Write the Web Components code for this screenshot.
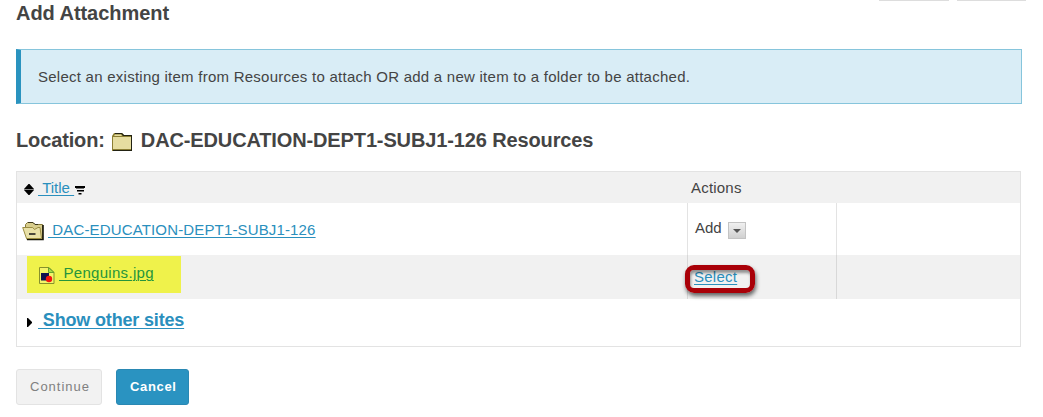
<!DOCTYPE html>
<html lang="en"><head><meta charset="utf-8"><title>Add Attachment</title>
<style>
html,body{margin:0;background:#fff}
body{height:417px;overflow:hidden;font:15px/20px "Liberation Sans",Arial,sans-serif;color:#444}
</style></head><body>
<attachment-page></attachment-page>
<script>
const define=(name,html)=>{
  const t=document.createElement('template');t.innerHTML=html;
  customElements.define(name,class extends HTMLElement{
    constructor(){super();this.attachShadow({mode:'open'}).append(t.content.cloneNode(true));}
  });
};
define('page-title',`<style>:host{display:flex;font-size:20px;line-height:24px;font-weight:700;white-space:pre;letter-spacing:-.05px}</style><slot></slot>`);
define('info-banner',`<style>:host{display:block;box-sizing:border-box;width:1006px;height:55px;border:1px solid #86c5dc;border-left:5px solid #2a93bf;background:#d9edf6;padding:17px 17px 0;letter-spacing:.25px;white-space:nowrap}</style><slot></slot>`);
define('text-link',`<style>:host{display:block;color:#2a8fbd;white-space:pre;text-decoration:underline;text-decoration-thickness:1px;text-underline-offset:2px}</style><slot></slot>`);
define('folder-icon',`<style>:host{display:block;width:20px;height:18px;white-space:normal}svg{display:block}</style>
<svg width="20" height="18"><path d="M0 18V3L2 0h8l2 2h8v16z" fill="#8b7e33"/><path d="M3 0h7l2 2h8v1H11L9.500 1H3z" fill="#222212"/><path d="M1 4h18v12H1z" fill="#e6dda0"/><path d="M3 1.500h6l1 1.500H2z" fill="#e6dda0"/><path d="M19 3h1v15H1v-1h18z" fill="#222212"/></svg>`);
define('open-folder-icon',`<style>:host{display:block;width:22px;height:19px;white-space:normal}svg{display:block}</style>
<svg width="22" height="19"><path d="M3.500 8V2.500l2-2H11l2 2h7.500v15H5z" fill="#d8cd8c" stroke="#857839"/><path d="M6 .500h5l2 2h3" fill="none" stroke="#3a351a"/><path d="M21 3v14.500H5" fill="none" stroke="#16160a" stroke-width="1.600"/><path d="M.7 5.500h10L12.500 7.500 16 5.500h2l1.500 11H4.500z" fill="#e9e1a8" stroke="#9b8d43"/><path d="M7 12h6.500" stroke="#222" stroke-width="1.600"/></svg>`);
define('image-icon',`<style>:host{display:block;width:16px;height:18px;white-space:normal}svg{display:block}</style>
<svg width="16" height="18"><path d="M.5.500H10l5 5v11H.5z" fill="#f4f468" stroke="#87912c"/><path d="M9.500.500v5H15z" fill="#a8dc4a" stroke="#66a32c"/><path d="M2 6h8v7.500H2z" fill="#10104f"/><circle cx="10" cy="12" r="3.200" fill="#f5160d"/></svg>`);
define('sort-icon',`<style>:host{display:block;width:10px;height:11px;white-space:normal}svg{display:block}</style>
<svg width="10" height="11"><path d="M0 5 4.500 0h1L10 5z" fill="#000"/><path d="M0 6h10L5.500 11h-1z" fill="#000"/><path d="M0 5h10v1H0z" fill="#888"/></svg>`);
define('filter-icon',`<style>:host{display:block;width:10px;height:9px;white-space:normal}svg{display:block}</style>
<svg width="10" height="9"><path d="M0 0h10v2H0zM2 4h7v1.500H2zM3.500 7h3v1.500h-3z" fill="#000"/><path d="M1 2h8v1H1zM3 5h5v1H3z" fill="#777"/></svg>`);
define('expand-icon',`<style>:host{display:block;width:5px;height:9px;white-space:normal}svg{display:block}</style><svg width="5" height="9"><path d="M0 0h1l4 4v1L1 9H0z" fill="#000"/></svg>`);
define('menu-toggle',`<style>:host{display:block;box-sizing:border-box;width:18px;height:17px;border:1px solid #c3c3c3;background:linear-gradient(#f0f0f0,#d0d0d0);white-space:normal}svg{display:block}</style><svg width="16" height="15"><path d="M4 6h8l-4 4z" fill="#555"/></svg>`);
define('action-button',`<style>:host{display:block;box-sizing:border-box;height:36px;border:1px solid #e3e3e3;border-radius:3px;background:#f2f2f2;color:#808080;font-size:13px;line-height:34px;padding-left:13px;letter-spacing:1px;white-space:nowrap;width:86px}:host([primary]){width:73px;background:#2a93c1;border-color:#2a88b3;color:#fff;font-weight:700;letter-spacing:.65px}</style><slot></slot>`);
define('resource-table',`<style>
:host{display:block;box-sizing:border-box;width:1005px;height:176px;border:1px solid #e3e3e3}
.r{display:grid;grid-template-columns:670px 149px 184px;height:52px}.c{display:flex;align-items:flex-start;box-sizing:border-box;white-space:pre}
.r .c+.c{border-left:1px solid #e3e3e3}.r.h{height:31px;background:#f1f1f1}.r.h .c+.c{border-color:transparent}
.r.f{height:44px;background:#f1f1f1}.r.f .c+.c{border-color:#d8d8d8}.s{height:47px;font-size:18px;font-weight:700;letter-spacing:-.17px}
.mark{display:flex;box-sizing:border-box;width:154px;height:37px;margin:1px 0 0 10px;padding:7px 0 0 12px;background:#eff24b}
.mark text-link{color:#25953d;letter-spacing:.3px}
.c.wrap{position:relative;padding:12px 0 0 6px;letter-spacing:.25px}
.ring{position:absolute;left:-3px;top:10px;width:70px;height:28px;box-sizing:border-box;border:5px solid #a90008;border-radius:9px;box-shadow:1px 3px 4px #0009,inset 1px 3px 3px #0006}
</style>
<div class="r h"><div class="c"><sort-icon style="margin:12px 4px 0 7px"></sort-icon><text-link style="margin-top:6px">&nbsp;Title </text-link><filter-icon style="margin:14px 0 0 1px"></filter-icon></div><div class="c" style="padding:6px 0 0 3px;letter-spacing:.2px">Actions</div><div class="c"></div></div>
<div class="r"><div class="c"><open-folder-icon style="margin:19px 4px 0 5px"></open-folder-icon><text-link style="margin-top:17px;letter-spacing:.15px">&nbsp;DAC-EDUCATION-DEPT1-SUBJ1-126</text-link></div><div class="c" style="padding:15px 0 0 7px"><span>Add</span><menu-toggle style="margin:4px 0 0 6px"></menu-toggle></div><div class="c"></div></div>
<div class="r f"><div class="c"><div class="mark"><image-icon style="margin:4px 4px 0 0"></image-icon><text-link>&nbsp;Penguins.jpg</text-link></div></div><div class="c wrap"><text-link>Select</text-link><span class="ring"></span></div><div class="c"></div></div>
<div class="c s"><expand-icon style="margin:19px 6px 0 10px"></expand-icon><text-link style="margin-top:11px">&nbsp;Show other sites</text-link></div>`);
define('attachment-page',`<style>
:host{display:flex;flex-direction:column;padding:0 16px}
.tabs{display:flex;gap:8px;height:1px;margin-left:863px}.tabs i{width:70px;background:#ddd}.tabs i+i{width:69px}
.buttons{display:flex;gap:14px;margin-top:22px}
</style>
<div class="tabs"><i></i><i></i></div>
<page-title>Add Attachment</page-title>
<info-banner style="margin-top:24px">Select an existing item from Resources to attach OR add a new item to a folder to be attached.</info-banner>
<page-title style="margin-top:24px;letter-spacing:-.13px">Location:<folder-icon style="margin:5px 9px 0 7px"></folder-icon>DAC-EDUCATION-DEPT1-SUBJ1-126 Resources</page-title>
<resource-table style="margin-top:19px"></resource-table>
<div class="buttons"><action-button>Continue</action-button><action-button primary>Cancel</action-button></div>`);
</script></body></html>
